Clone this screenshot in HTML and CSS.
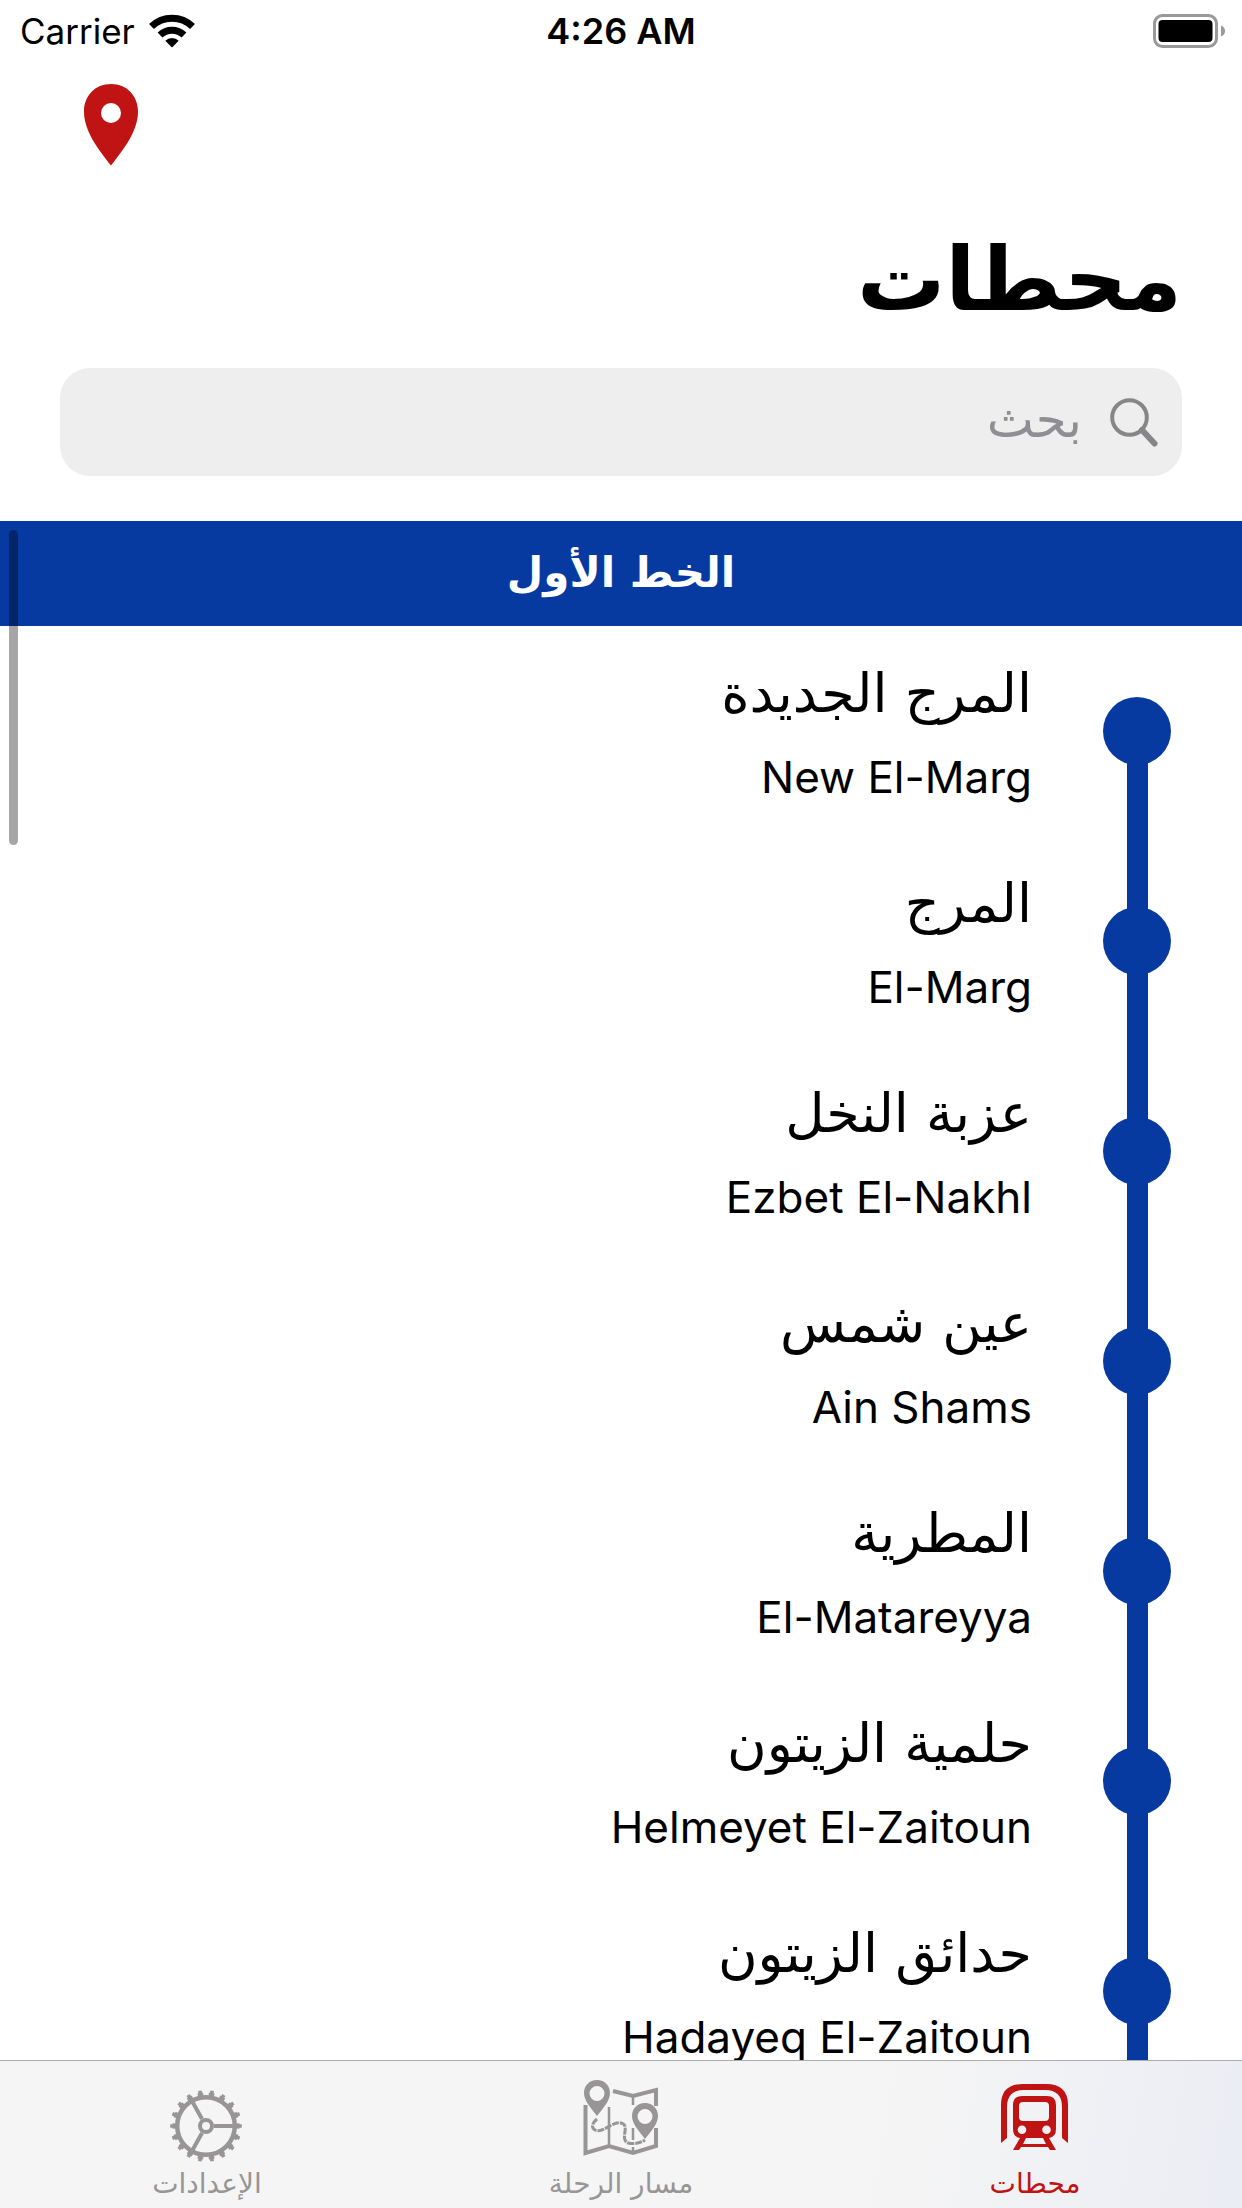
FILE: index.html
```html
<!DOCTYPE html>
<html lang="ar" dir="rtl">
<head>
<meta charset="utf-8">
<meta name="viewport" content="width=device-width, initial-scale=1">
<title>محطات</title>
<link rel="stylesheet" href="styles.css">
</head>
<body>
<div class="status" dir="ltr">
  <div class="status-left">
    <span>Carrier</span>
    <svg class="wifi" viewBox="0 0 46 34" aria-hidden="true">
      <g fill="none" stroke="#000" stroke-width="7">
        <path d="M2.500 12.500A29.500 29.500 0 0 1 43.500 12.500"/>
        <path d="M11 21A17.500 17.500 0 0 1 35 21"/>
      </g>
      <path d="M23 33.500L16.300 26.800A9.500 9.500 0 0 1 29.700 26.800Z"/>
    </svg>
  </div>
  <span class="time">4:26 AM</span>
  <svg class="battery" viewBox="0 0 73 34" aria-hidden="true">
    <rect x="1.500" y="1.500" width="62" height="31" rx="8" fill="none" stroke="#999" stroke-width="3"/>
    <rect x="5.500" y="6" width="54" height="22" rx="4"/>
    <path d="M68 11.500Q72 13 72 17T68 22.500Z" fill="#999"/>
  </svg>
</div>
<header class="top">
  <button class="locate" type="button" aria-label="الموقع">
    <svg viewBox="0 0 54 82" aria-hidden="true"><path fill="#c01414" fill-rule="evenodd" d="M27 0C11 0 0 12 0 27.500C0 47 14 65 27 81.500C40 65 54 47 54 27.500C54 12 43 0 27 0ZM27 19A10 10 0 1 1 27 39A10 10 0 1 1 27 19Z"/></svg>
  </button>
  <h1>محطات</h1>
  <label class="search">
    <svg viewBox="0 0 48 49" aria-hidden="true"><g fill="none" stroke="#868688"><circle cx="19.500" cy="19.500" r="17.300" stroke-width="4"/><path d="M32 32L44.500 45.500" stroke-width="6" stroke-linecap="round"/></g></svg>
    <input type="text" placeholder="بحث" aria-label="بحث">
  </label>
</header>
<main class="line">
  <h2>الخط الأول</h2>
  <ol class="stations">
    <li><strong>المرج الجديدة</strong><span dir="ltr">New El-Marg</span></li>
    <li><strong>المرج</strong><span dir="ltr">El-Marg</span></li>
    <li><strong>عزبة النخل</strong><span dir="ltr">Ezbet El-Nakhl</span></li>
    <li><strong>عين شمس</strong><span dir="ltr">Ain Shams</span></li>
    <li><strong>المطرية</strong><span dir="ltr">El-Matareyya</span></li>
    <li><strong>حلمية الزيتون</strong><span dir="ltr">Helmeyet El-Zaitoun</span></li>
    <li><strong>حدائق الزيتون</strong><span dir="ltr">Hadayeq El-Zaitoun</span></li>
  </ol>
  <div class="scrollbar"></div>
</main>
<nav class="tabs">
  <a class="tab active" href="#stations">
    <svg viewBox="1 -1 76 84" aria-hidden="true">
      <path fill="currentColor" d="M5 63V25Q5 4 27 4H50Q72 4 72 25V63L66 58V27Q66 10 49 10H28Q11 10 11 27V58Z"/>
      <path fill="currentColor" fill-rule="evenodd" d="M26 16H51Q60 16 60 25V49Q60 57 53 58L60 70H54L52 67H25L23 70H17L24 58Q17 57 17 49V25Q17 16 26 16ZM27 22Q23 22 23 26V37Q23 41 27 41H49Q53 41 53 37V26Q53 22 49 22ZM26 45.500A4.300 4.300 0 1 0 26 54.100A4.300 4.300 0 1 0 26 45.500ZM50.500 45.500A4.300 4.300 0 1 0 50.500 54.100A4.300 4.300 0 1 0 50.500 45.500ZM30 58L27 64H50L47 58Z"/>
    </svg>
    <span>محطات</span>
  </a>
  <a class="tab" href="#route">
    <svg viewBox="0 -1 76 84" aria-hidden="true">
      <g fill="none" stroke="currentColor" stroke-width="4">
        <path d="M2.500 25V73L26 66L50 73L73 66V48M73 26V10L50 16L30 11"/>
        <path d="M26 27V66M50 16V25M50 48V60M50 67V73" stroke-width="2.500"/>
        <path d="M14 39Q6 46 12 50C20 54 29 41 38 43C48 45 36 59 45 63Q54 65 62 60" stroke-width="3" stroke-dasharray="7 1"/>
      </g>
      <g fill="currentColor" fill-rule="evenodd">
        <path d="M14 0C6 0 1 6 1 13C1 21 8 28 14 36C20 28 27 21 27 13C27 6 22 0 14 0ZM14 6A7.500 7.500 0 1 1 14 21A7.500 7.500 0 1 1 14 6Z"/>
        <path d="M62 23C54 23 49 29 49 36C49 44 56 51 62 59C68 51 75 44 75 36C75 29 70 23 62 23ZM62 29A7.500 7.500 0 1 1 62 44A7.500 7.500 0 1 1 62 29Z"/>
      </g>
    </svg>
    <span>مسار الرحلة</span>
  </a>
  <a class="tab" href="#settings">
    <svg viewBox="0 0 76 84" aria-hidden="true">
      <g fill="none" stroke="currentColor">
        <circle cx="37" cy="47" r="28.800" stroke-width="4.500"/>
        <circle cx="37" cy="47" r="6" stroke-width="4"/>
        <path d="M45 47H65M33 40L23 22M33 54L23 72" stroke-width="4"/>
        <circle cx="37" cy="47" r="31.800" stroke-width="3.500" stroke-dasharray="5 5" stroke-dashoffset="2.500" pathLength="180"/>
        <circle cx="37" cy="47" r="34.300" stroke-width="3" stroke-dasharray="3 7" stroke-dashoffset="1.500" pathLength="180"/>
      </g>
    </svg>
    <span>الإعدادات</span>
  </a>
</nav>
</body>
</html>
```
FILE: styles.css
```css
* { box-sizing: border-box; margin: 0; padding: 0; }
body {
  height: 100vh;
  display: flex;
  flex-direction: column;
  overflow: hidden;
  background: #fff;
  color: #000;
  font-family: Inter, "DejaVu Sans", sans-serif;
}
svg { display: block; flex: none; }
.status {
  display: grid;
  grid-template-columns: 1fr auto 1fr;
  align-items: center;
  height: 60px;
  padding: 0 16px;
  font-size: 35px;
  line-height: 62px;
}
.status-left { display: flex; align-items: center; gap: 14px; padding-left: 4px; }
.wifi { width: 46px; height: 34px; }
.time { font-size: 36px; font-weight: 600; }
.battery { width: 73px; height: 34px; justify-self: end; }
.top { padding: 24px 60px 45px; }
.locate {
  display: block;
  margin: 0 auto 0 24px;
  border: 0;
  background: none;
}
.locate svg { width: 54px; height: 82px; }
h1 {
  height: 202px;
  font: bold 88px/228px "DejaVu Sans", sans-serif;
}
.search {
  display: flex;
  align-items: center;
  gap: 28px;
  height: 108px;
  padding: 0 24px;
  border-radius: 30px;
  background: #eee;
}
.search svg { width: 48px; height: 49px; }
.search input {
  flex: 1;
  min-width: 0;
  height: 100%;
  padding-bottom: 4px;
  border: 0;
  outline: 0;
  background: none;
  font: 50px "DejaVu Sans", sans-serif;
}
.search input::placeholder { color: #8e8e93; opacity: 1; }
.line { position: relative; flex: 1; min-height: 0; overflow: hidden; }
h2 {
  height: 105px;
  background: #073aa0;
  color: #fff;
  text-align: center;
  font: bold 42px/103px "DejaVu Sans", sans-serif;
}
.stations { list-style: none; }
.stations li {
  position: relative;
  display: flex;
  flex-direction: column;
  align-items: flex-start;
  height: 210px;
  padding: 28px 210px 0 60px;
}
.stations strong { font: 54px/80px "DejaVu Sans", sans-serif; }
.stations span { font-size: 44px; line-height: 86px; }
.stations li::before, .stations li::after {
  content: "";
  position: absolute;
  background: #073aa0;
}
.stations li::before { top: 0; bottom: 0; right: 94px; width: 21px; }
.stations li:first-child::before { top: 50%; }
.stations li::after { top: 71px; right: 71px; width: 68px; height: 68px; border-radius: 50%; }
.scrollbar {
  position: absolute;
  top: 9px;
  left: 9px;
  width: 9px;
  height: 315px;
  border-radius: 5px;
  background: rgba(0, 0, 0, .35);
}
.tabs {
  display: grid;
  grid-template-columns: repeat(3, 1fr);
  height: 148px;
  border-top: 1px solid #acacac;
  background: linear-gradient(100deg, #f5f5f5 70%, #ebedf4);
}
.tab {
  display: flex;
  flex-direction: column;
  align-items: center;
  padding-top: 18px;
  color: #979595;
  font: 28px/42px "DejaVu Sans", sans-serif;
  text-decoration: none;
}
.tab svg { width: 76px; height: 84px; }
.tab.active { color: #c01414; }
```
